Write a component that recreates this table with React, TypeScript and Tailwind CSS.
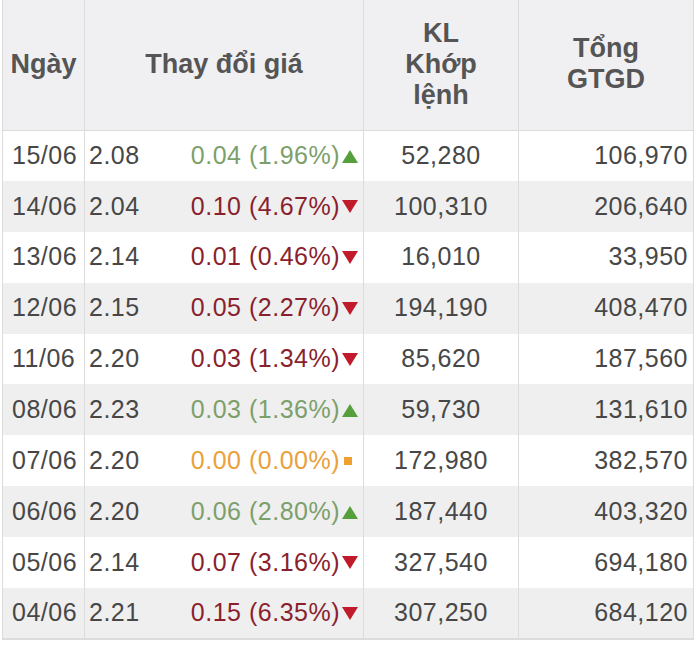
const rows = [
  { date: '15/06', price: '2.08', change: '0.04 (1.96%)', dir: 'up', vol: '52,280', total: '106,970' },
  { date: '14/06', price: '2.04', change: '0.10 (4.67%)', dir: 'down', vol: '100,310', total: '206,640' },
  { date: '13/06', price: '2.14', change: '0.01 (0.46%)', dir: 'down', vol: '16,010', total: '33,950' },
  { date: '12/06', price: '2.15', change: '0.05 (2.27%)', dir: 'down', vol: '194,190', total: '408,470' },
  { date: '11/06', price: '2.20', change: '0.03 (1.34%)', dir: 'down', vol: '85,620', total: '187,560' },
  { date: '08/06', price: '2.23', change: '0.03 (1.36%)', dir: 'up', vol: '59,730', total: '131,610' },
  { date: '07/06', price: '2.20', change: '0.00 (0.00%)', dir: 'flat', vol: '172,980', total: '382,570' },
  { date: '06/06', price: '2.20', change: '0.06 (2.80%)', dir: 'up', vol: '187,440', total: '403,320' },
  { date: '05/06', price: '2.14', change: '0.07 (3.16%)', dir: 'down', vol: '327,540', total: '694,180' },
  { date: '04/06', price: '2.21', change: '0.15 (6.35%)', dir: 'down', vol: '307,250', total: '684,120' },
]

function Arrow({ dir }: { dir: string }) {
  if (dir === 'up') {
    return (
      <svg width="17" height="14" viewBox="0 0 17 14" className="inline-block ml-[2px] mb-[3px]">
        <polygon points="8,1 16,14 0,14" fill="#55a03c" />
      </svg>
    )
  }
  if (dir === 'down') {
    return (
      <svg width="17" height="14" viewBox="0 0 17 14" className="inline-block ml-[2px] mb-[2px]">
        <polygon points="0,0 16,0 8,13" fill="#c11a2b" />
      </svg>
    )
  }
  return (
    <svg width="17" height="14" viewBox="0 0 17 14" className="inline-block ml-[2px] mb-[2px]">
      <rect x="2" y="3" width="8" height="8" fill="#f0a030" />
    </svg>
  )
}

const changeColor: Record<string, string> = {
  up: 'text-[#7d9f6b]',
  down: 'text-[#8a1f2e]',
  flat: 'text-[#e9a13c]',
}

export default function App() {
  return (
    <div className="w-[700px] h-[646px] bg-white pl-[2px]" style={{ fontFamily: '"Liberation Sans", Arial, sans-serif' }}>
      <table className="w-[691px] border-collapse table-fixed text-[25px] tracking-[0.5px] text-[#474747]">
        <colgroup>
          <col className="w-[82px]" />
          <col className="w-[96px]" />
          <col className="w-[183px]" />
          <col className="w-[155px]" />
          <col className="w-[175px]" />
        </colgroup>
        <thead>
          <tr className="h-[130px] bg-[#f0f0f3] text-[27px] font-bold leading-[31px] tracking-normal text-[#555]">
            <th className="border-x border-b border-[#dcdcdc] text-center font-bold">Ngày</th>
            <th colSpan={2} className="border-x border-b border-[#dcdcdc] text-center font-bold">Thay đổi giá</th>
            <th className="border-x border-b border-[#dcdcdc] text-center font-bold">
              KL<br />Khớp<br />lệnh
            </th>
            <th className="border-x border-b border-[#dcdcdc] text-center font-bold pb-[2px]">
              Tổng<br />GTGD
            </th>
          </tr>
        </thead>
        <tbody>
          {rows.map((r, i) => (
            <tr key={r.date} className={`h-[50.9px] ${i % 2 === 1 ? 'bg-[#efefef]' : 'bg-white'}`}>
              <td className="border-l border-[#dcdcdc] pl-[9px] whitespace-nowrap">{r.date}</td>
              <td className="border-l border-[#dcdcdc] pl-[4px] whitespace-nowrap">{r.price}</td>
              <td className={`text-right pr-[4px] whitespace-nowrap ${changeColor[r.dir]}`}>
                {r.change}
                <Arrow dir={r.dir} />
              </td>
              <td className="border-x border-[#dcdcdc] text-center whitespace-nowrap">{r.vol}</td>
              <td className="border-r border-[#dcdcdc] text-right pr-[5px] whitespace-nowrap">{r.total}</td>
            </tr>
          ))}
          <tr className="h-0">
            <td colSpan={5} className="border-t-2 border-[#dcdcdc] p-0"></td>
          </tr>
        </tbody>
      </table>
    </div>
  )
}
